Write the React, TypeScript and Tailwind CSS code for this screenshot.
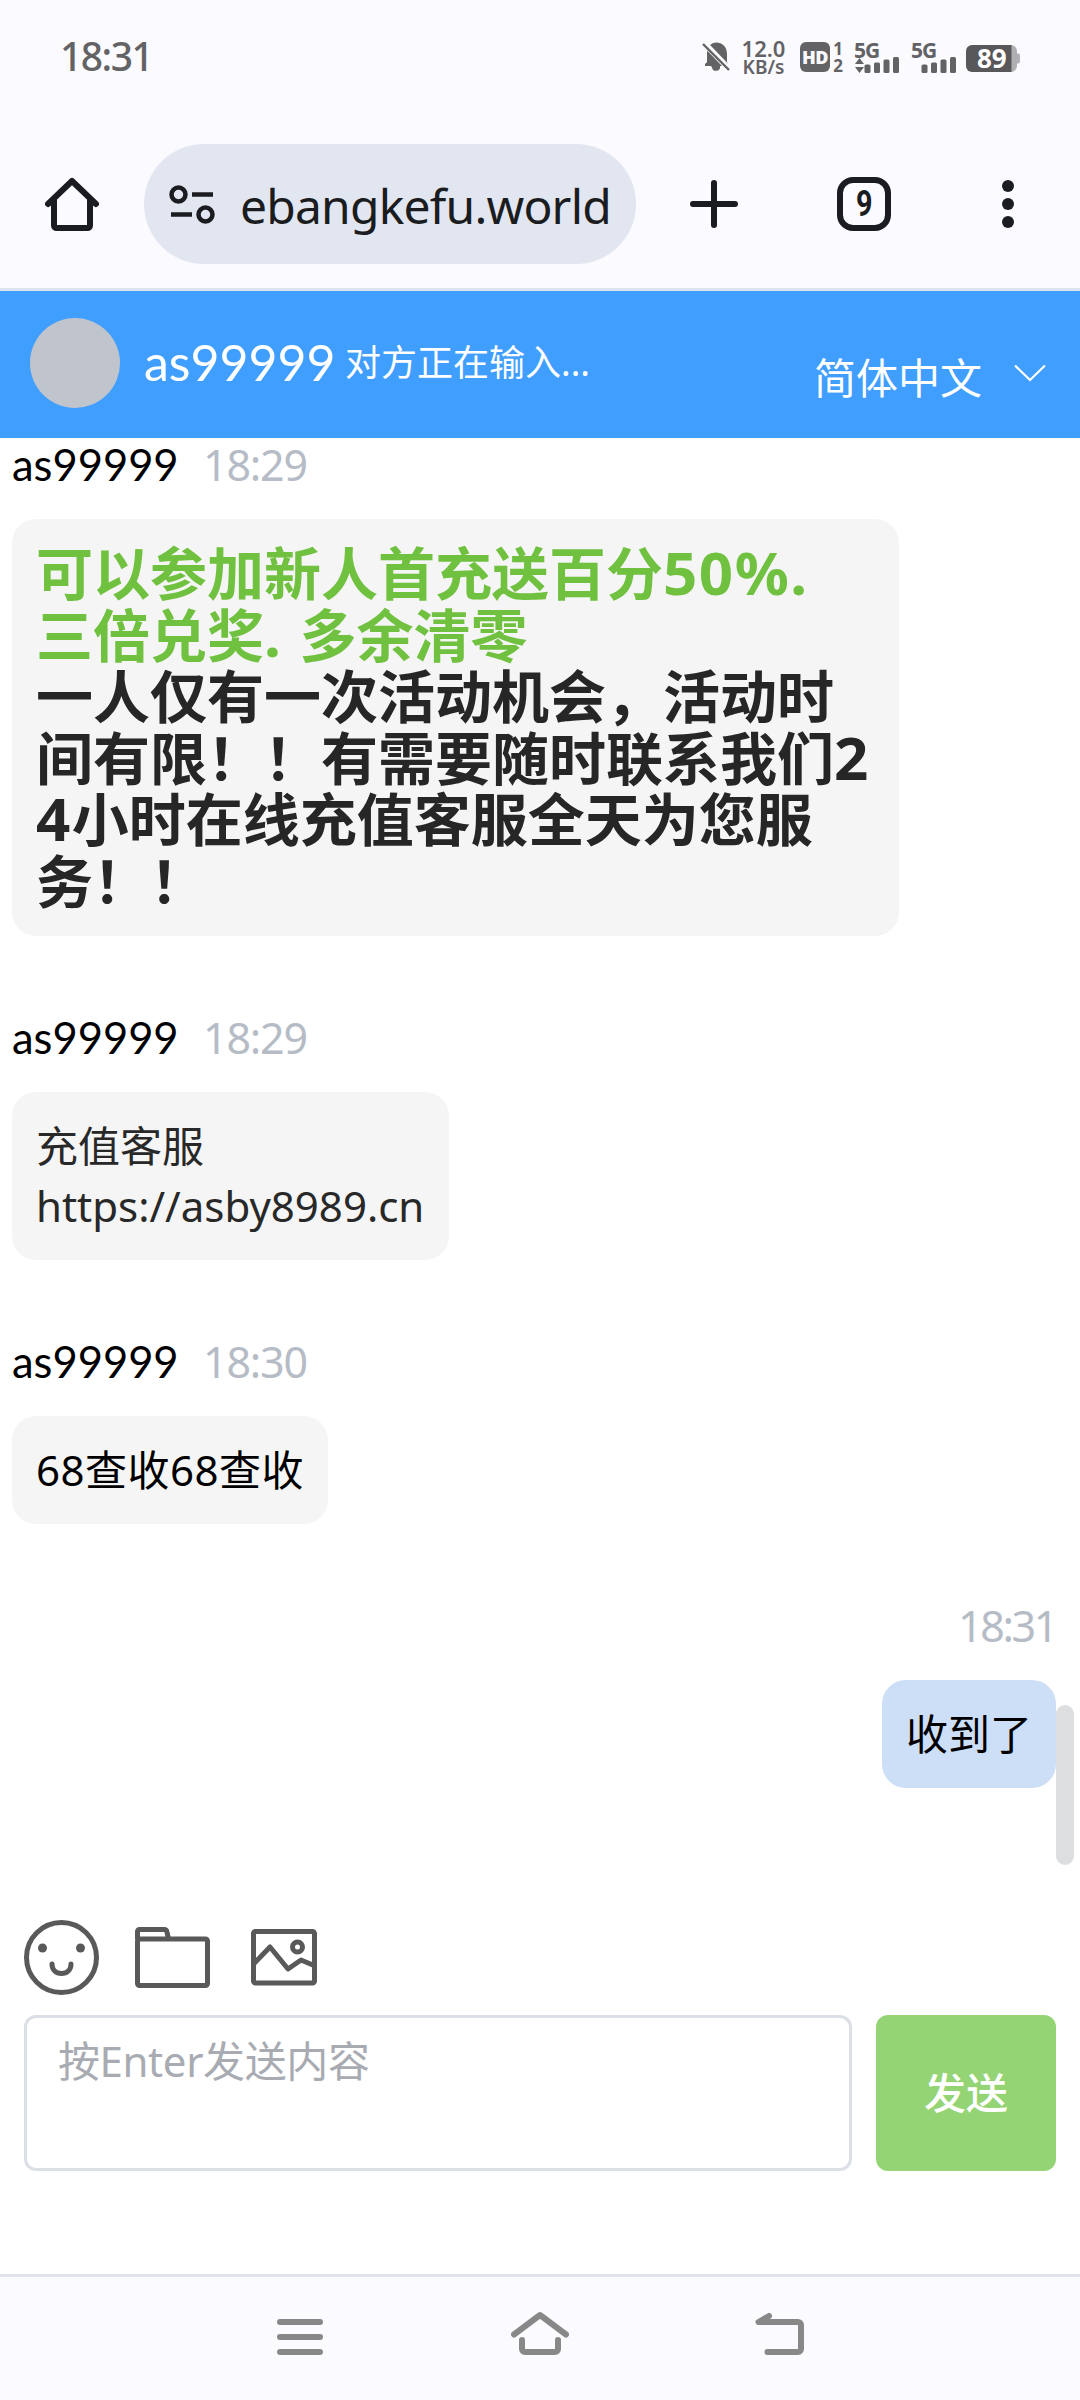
import type { ReactNode } from 'react';

const SignalBars = ({ arrows = false }: { arrows?: boolean }) => (
  <div className="relative h-[33px] w-[45px]">
    <span className="block -translate-x-px -translate-y-[1.500px] text-[21px] leading-[20px] font-bold tracking-[-1px]">5G</span>
    <svg className="absolute inset-0" width="45" height="33" viewBox="0 0 45 33" fill="currentColor">
      {arrows && <path d="M0 23l4.5-6L9 23zM0 26h9l-4.5 6z" />}
      <rect x="9.5" y="23.5" width="6" height="8.5" rx="1.5" />
      <rect x="19" y="21.5" width="6" height="10.5" rx="1.5" />
      <rect x="28.5" y="18.5" width="6" height="13.5" rx="1.5" />
      <rect x="38" y="16" width="6" height="16" rx="1.5" />
    </svg>
  </div>
);

const StatusBar = () => (
  <div className="flex h-[114px] items-center pr-[60px] pl-[60px] text-[#636366]">
    <span className="mr-auto -translate-y-px text-[39px] leading-[54px] font-medium tracking-[-1.500px]">18:31</span>

    {/* Muted bell */}
    <svg width="28" height="32" viewBox="0 0 28 32" className="mr-[11px] -mt-px" fill="currentColor">
      <path d="M3 25V23l2-2v-8C5 5.5 9 1.500 14.500 1.500S25 5.500 25 13v8l1 2v2H18a4 4 0 0 1-8 1.500L9 25z" />
      <path d="M2 2l26 27" stroke="#fafaff" strokeWidth="6" />
      <path d="M1 3l26 26" stroke="currentColor" strokeWidth="2.400" />
    </svg>

    <div className="mt-[2px] mr-[14px] flex w-[45px] flex-col items-center">
      <span className="text-[22px] leading-[19px] font-semibold">12.0</span>
      <span className="text-[19px] leading-[19px] font-semibold">KB/s</span>
    </div>

    <div className="flex h-[30px] w-[30px] items-center justify-center rounded-[6px] bg-[#636366]">
      <span className="text-[18px] leading-none font-black tracking-[-0.500px] text-[#fafaff]">HD</span>
    </div>
    <div className="mr-[11px] ml-[2px] flex w-[12px] flex-col items-center text-[17px] leading-[17px] font-bold">
      <span>1</span>
      <span>2</span>
    </div>

    <SignalBars arrows />
    <div className="w-[12px]" />
    <SignalBars />

    {/* Battery */}
    <div className="relative mt-[2px] ml-[9px] h-[27px] w-[54px]">
      <svg width="54" height="27" viewBox="0 0 54 27">
        <path d="M44 0h1a6 6 0 0 1 6 6v2.500h1a2 2 0 0 1 2 2v6a2 2 0 0 1-2 2h-1V21a6 6 0 0 1-6 6h-1z" fill="#b0b0b4" />
        <path d="M6 0h39.500v27H6a6 6 0 0 1-6-6V6a6 6 0 0 1 6-6z" fill="#58585a" />
      </svg>
      <span className="absolute top-0 left-[11px] text-[26px] leading-[27px] font-bold text-white">89</span>
    </div>
  </div>
);

const BrowserBar = () => (
  <div className="flex h-[177px] items-start border-b-[3px] border-[#dde3ed] pt-[30px] text-[#1b1c20]">
    <svg className="mt-[33px] ml-[45px]" width="54" height="54" viewBox="0 0 54 54" fill="none" stroke="currentColor" strokeWidth="6" strokeLinejoin="round" strokeLinecap="round">
      <path d="M3 27L27 4l24 23" />
      <path d="M9 24v24.500a2.500 2.500 0 0 0 2.500 2.500h31a2.500 2.500 0 0 0 2.500-2.500V24" />
    </svg>

    <div className="ml-[45px] flex h-[120px] w-[492px] items-center rounded-full bg-[#e2e6f1] pl-[25px]">
      <svg width="46" height="40" viewBox="0 0 46 40" fill="none" stroke="currentColor" strokeWidth="4.500">
        <circle cx="9.500" cy="10.500" r="7" />
        <path d="M23 10.500h21M2 30.500h21" />
        <circle cx="36.500" cy="30.500" r="7" />
      </svg>
      <span className="mt-[4px] ml-[25px] text-[48px] leading-[60px] tracking-[-0.800px]">ebangkefu.world</span>
    </div>

    <svg className="mt-[36px] ml-[54px]" width="48" height="48" viewBox="0 0 48 48" stroke="currentColor" strokeWidth="6" strokeLinecap="round">
      <path d="M24 3v42M3 24h42" />
    </svg>

    <div className="mt-[33px] ml-[99px] flex h-[54px] w-[54px] items-center justify-center rounded-[16px] border-[6px] border-current">
      <span className="scale-x-80 font-['Roboto'] text-[36px] leading-none font-bold">9</span>
    </div>

    <svg className="mt-[36px] ml-[111px]" width="12" height="48" viewBox="0 0 12 48" fill="currentColor">
      <circle cx="6" cy="6" r="6" />
      <circle cx="6" cy="24" r="6" />
      <circle cx="6" cy="42" r="6" />
    </svg>
  </div>
);

const ChatHeader = () => (
  <div className="flex h-[147px] items-center bg-[#409eff] pr-[34px] pb-[3px] pl-[30px] text-white">
    <div className="h-[90px] w-[90px] rounded-full bg-[#c0c4cc]" />
    <span className="ml-[24px] w-[190px] -translate-y-px font-['Lato'] text-[50px] leading-[60px]">as99999</span>
    <span className="ml-[11px] text-[36px] leading-[48px]">对方正在输入...</span>
    <span className="mt-[30px] ml-auto text-[42px] leading-[54px]">简体中文</span>
    <svg className="mt-[20px] ml-[32px]" width="32" height="18" viewBox="0 0 32 18" fill="none" stroke="currentColor" strokeWidth="2.200">
      <path d="M1 1.500l15 14.500 15-14.500" />
    </svg>
  </div>
);

const MessageMeta = ({ name, time }: { name?: string; time: string }) => (
  <div className="mb-[27px] flex h-[54px] items-center text-[43px] leading-[54px]">
    {name && <span className="w-[191px] -translate-y-px font-['Lato'] text-[43.500px] text-black">{name}</span>}
    {name ? (
      <span className="tracking-[-1.200px] text-[#b6bcc6]">{time}</span>
    ) : (
      <span className="tracking-[-2.400px] text-[#b6bcc6]">{time}</span>
    )}
  </div>
);

const Digits = ({ children }: { children: ReactNode }) => (
  <span className="text-[60px] leading-[0] tracking-[1.500px]">{children}</span>
);

const Messages = () => (
  <div className="relative flex h-[1446px] flex-col items-start pr-[24px] pl-[12px]">
    <MessageMeta name="as99999" time="18:29" />
    <div className="h-[417px] w-[887px] rounded-[24px] bg-[#f5f5f5] p-[24px] text-[57px] leading-[61.500px] font-bold whitespace-nowrap text-[#262626]">
      <div className="text-[#71c141]">
        可以参加新人首充送百分<Digits>50%.</Digits>
        <br />
        三倍兑奖<Digits>. </Digits>多余清零
      </div>
      一人仅有一次活动机会，活动时
      <br />
      间有限！！有需要随时联系我们<Digits>2</Digits>
      <br />
      <Digits>4</Digits>小时在线充值客服全天为您服
      <br />
      务！！
    </div>

    <div className="h-[75px]" />
    <MessageMeta name="as99999" time="18:29" />
    <div className="h-[168px] w-[437px] rounded-[24px] bg-[#f5f5f5] p-[24px] text-[42px] leading-[60px] text-[#282828]">
      充值客服
      <br />
      https://asby8989.cn
    </div>

    <div className="h-[75px]" />
    <MessageMeta name="as99999" time="18:30" />
    <div className="h-[108px] w-[316px] rounded-[24px] bg-[#f5f5f5] p-[24px] text-[42px] leading-[60px] tracking-[0.500px] whitespace-nowrap text-black">
      68查收68查收
    </div>

    <div className="h-[75px]" />
    <div className="flex flex-col items-end self-end">
      <MessageMeta time="18:31" />
      <div className="h-[108px] w-[174px] rounded-[24px] bg-[#cddef7] px-[24px] pt-[24px] text-[42px] leading-[60px] whitespace-nowrap text-black">
        收到了
      </div>
    </div>

    {/* Scroll thumb over the message list */}
    <div className="absolute top-[1267px] right-[6px] h-[160px] w-[18px] rounded-full bg-[#dddee0]" />
  </div>
);

const Composer = () => (
  <div className="h-[390px] px-[24px]">
    <div className="flex h-[131px] items-start pt-[36px] text-[#595959]">
      <svg width="75" height="75" viewBox="0 0 75 75" fill="none" stroke="currentColor" strokeWidth="5">
        <circle cx="37.500" cy="37.500" r="35" />
        <circle cx="18.500" cy="28" r="4.500" fill="currentColor" stroke="none" />
        <circle cx="56.500" cy="28" r="4.500" fill="currentColor" stroke="none" />
        <path d="M28 44c0 6 4 9.500 9.500 9.500S47 50 47 44" strokeLinecap="round" />
      </svg>
      <svg className="mt-[7px] ml-[36px]" width="75" height="61" viewBox="0 0 75 61" fill="none" stroke="currentColor" strokeWidth="5" strokeLinejoin="round">
        <rect x="2.500" y="12" width="70" height="46.500" rx="2" />
        <path d="M2.500 12V4.500a2 2 0 0 1 2-2H29a3 3 0 0 1 3 2.500l1.500 7" />
      </svg>
      <svg className="mt-[9px] ml-[40.500px]" width="66" height="57" viewBox="0 0 66 57" fill="none" stroke="currentColor" strokeWidth="5">
        <rect x="2.500" y="2.500" width="61" height="51.500" rx="2" />
        <path d="M3 34.500L19 18l18 22 13-9 13 5.500" strokeLinejoin="round" />
        <circle cx="46.500" cy="18" r="5" />
      </svg>
    </div>
    <div className="flex gap-[24px]">
      <textarea
        placeholder="按Enter发送内容"
        className="block h-[156px] w-[828px] resize-none rounded-[12px] border-[3px] border-[#dcdfe6] bg-white px-[31px] pt-[11px] text-[42px] leading-[63px] tracking-[-0.400px] outline-none placeholder:text-[#a8abb2]"
      />
      <button className="h-[156px] w-[180px] rounded-[12px] bg-[#95d475] text-[42px] leading-none font-medium text-white">
        发送
      </button>
    </div>
  </div>
);

const NavBar = () => (
  <div className="flex h-[126px] items-start border-t-[3px] border-[#e0e3e9] bg-[#fafaff] pt-[34px] pl-[277px] text-[#888888]">
    <svg width="46" height="46" viewBox="0 0 46 46" stroke="currentColor" strokeWidth="6" strokeLinecap="round">
      <path d="M3 11h40M3 26h40M3 41h40" />
    </svg>
    <svg className="ml-[188px]" width="58" height="46" viewBox="0 0 58 46" fill="none" stroke="currentColor" strokeWidth="6" strokeLinecap="round" strokeLinejoin="round">
      <path d="M3 23.500L29 4l26 19.500" />
      <path d="M11 29v9a3 3 0 0 0 3 3h30a3 3 0 0 0 3-3v-9" />
    </svg>
    <svg className="ml-[186px]" width="50" height="46" viewBox="0 0 50 46" fill="none" stroke="currentColor" strokeWidth="6" strokeLinecap="round" strokeLinejoin="round">
      <path d="M14 5L3.500 11H43a3 3 0 0 1 3 3v24a3 3 0 0 1-3 3H12.500" />
    </svg>
  </div>
);

const App = () => {
  return (
    <div className="h-[2400px] w-[1080px] overflow-hidden bg-white font-['Noto_Sans','Noto_Sans_CJK_SC',sans-serif]">
      <div className="bg-[#fafaff]">
        <StatusBar />
        <BrowserBar />
      </div>
      <ChatHeader />
      <Messages />
      <Composer />
      <NavBar />
    </div>
  );
};

export default App;
